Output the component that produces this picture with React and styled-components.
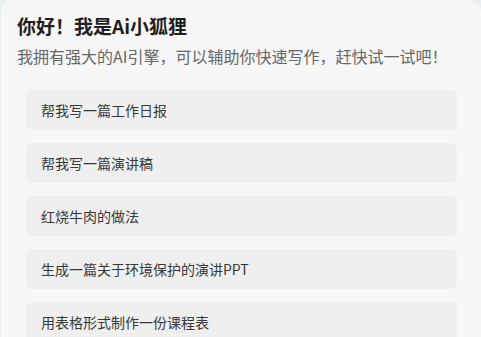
import React from "react";
import styled, { createGlobalStyle } from "styled-components";

const Global = createGlobalStyle`
  html, body { margin: 0; padding: 0; background: #e9eff0; }
  body { font-family: "Noto Sans CJK SC", "Noto Sans", sans-serif; overflow: hidden; }
`;

const Card = styled.div`
  margin-left: 1px;
  width: 480px;
  min-height: 360px;
  box-sizing: border-box;
  background: #f7f7f7;
  border-radius: 12px 12px 0 0;
  padding: 13px 0 0;
`;

const Header = styled.div`
  padding: 0 16px;
`;

const Title = styled.h1`
  margin: 0;
  font-size: 19px;
  line-height: 26px;
  font-weight: 700;
  color: #1f1f1f;
`;

const Subtitle = styled.p`
  margin: 4px 0 0;
  font-size: 16px;
  line-height: 26px;
  color: #666;
`;

const List = styled.div`
  display: flex;
  flex-direction: column;
  gap: 13px;
  padding: 0 24px 0 25px;
  margin-top: 21px;
`;

const Item = styled.div`
  height: 40px;
  display: flex;
  align-items: center;
  padding: 0 15px;
  background: #efefef;
  border-radius: 6px;
  font-size: 14px;
  color: #383838;
`;

const items = [
  "帮我写一篇工作日报",
  "帮我写一篇演讲稿",
  "红烧牛肉的做法",
  "生成一篇关于环境保护的演讲PPT",
  "用表格形式制作一份课程表",
];

export default function App() {
  return (
    <>
      <Global />
      <Card>
        <Header>
          <Title>你好！我是Ai小狐狸</Title>
          <Subtitle>我拥有强大的AI引擎，可以辅助你快速写作，赶快试一试吧！</Subtitle>
        </Header>
        <List>
          {items.map((t) => (
            <Item key={t}>{t}</Item>
          ))}
        </List>
      </Card>
    </>
  );
}
